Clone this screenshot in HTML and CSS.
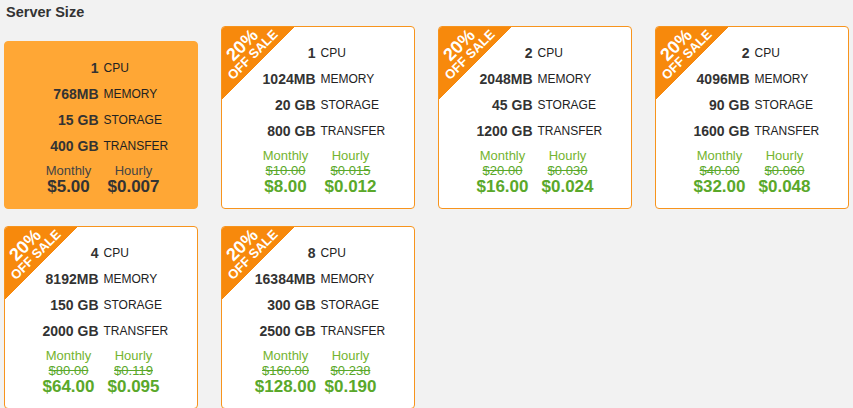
FILE: index.html
```html
<!DOCTYPE html>
<html lang="en">
<head>
<meta charset="UTF-8">
<title>Server Size</title>
<link rel="stylesheet" href="styles.css">
</head>
<body>

<h3 class="titulo">Server Size</h3>

<div class="planos">
    <div class="plano selecionado">
        <div class="specs">
            <b>1</b><span>CPU</span>
            <b>768MB</b><span>MEMORY</span>
            <b>15 GB</b><span>STORAGE</span>
            <b>400 GB</b><span>TRANSFER</span>
        </div>
        <div class="precos">
            <div><div class="rotulo">Monthly</div><div class="novo">$5.00</div></div>
            <div><div class="rotulo">Hourly</div><div class="novo">$0.007</div></div>
        </div>
    </div>

    <div class="plano">
        <div class="selo"><span class="pct">20%</span><span class="off">OFF SALE</span></div>
        <div class="specs">
            <b>1</b><span>CPU</span>
            <b>1024MB</b><span>MEMORY</span>
            <b>20 GB</b><span>STORAGE</span>
            <b>800 GB</b><span>TRANSFER</span>
        </div>
        <div class="precos">
            <div><div class="rotulo">Monthly</div><div class="antigo">$10.00</div><div class="novo">$8.00</div></div>
            <div><div class="rotulo">Hourly</div><div class="antigo">$0.015</div><div class="novo">$0.012</div></div>
        </div>
    </div>

    <div class="plano">
        <div class="selo"><span class="pct">20%</span><span class="off">OFF SALE</span></div>
        <div class="specs">
            <b>2</b><span>CPU</span>
            <b>2048MB</b><span>MEMORY</span>
            <b>45 GB</b><span>STORAGE</span>
            <b>1200 GB</b><span>TRANSFER</span>
        </div>
        <div class="precos">
            <div><div class="rotulo">Monthly</div><div class="antigo">$20.00</div><div class="novo">$16.00</div></div>
            <div><div class="rotulo">Hourly</div><div class="antigo">$0.030</div><div class="novo">$0.024</div></div>
        </div>
    </div>

    <div class="plano">
        <div class="selo"><span class="pct">20%</span><span class="off">OFF SALE</span></div>
        <div class="specs">
            <b>2</b><span>CPU</span>
            <b>4096MB</b><span>MEMORY</span>
            <b>90 GB</b><span>STORAGE</span>
            <b>1600 GB</b><span>TRANSFER</span>
        </div>
        <div class="precos">
            <div><div class="rotulo">Monthly</div><div class="antigo">$40.00</div><div class="novo">$32.00</div></div>
            <div><div class="rotulo">Hourly</div><div class="antigo">$0.060</div><div class="novo">$0.048</div></div>
        </div>
    </div>

    <div class="plano">
        <div class="selo"><span class="pct">20%</span><span class="off">OFF SALE</span></div>
        <div class="specs">
            <b>4</b><span>CPU</span>
            <b>8192MB</b><span>MEMORY</span>
            <b>150 GB</b><span>STORAGE</span>
            <b>2000 GB</b><span>TRANSFER</span>
        </div>
        <div class="precos">
            <div><div class="rotulo">Monthly</div><div class="antigo">$80.00</div><div class="novo">$64.00</div></div>
            <div><div class="rotulo">Hourly</div><div class="antigo">$0.119</div><div class="novo">$0.095</div></div>
        </div>
    </div>

    <div class="plano">
        <div class="selo"><span class="pct">20%</span><span class="off">OFF SALE</span></div>
        <div class="specs">
            <b>8</b><span>CPU</span>
            <b>16384MB</b><span>MEMORY</span>
            <b>300 GB</b><span>STORAGE</span>
            <b>2500 GB</b><span>TRANSFER</span>
        </div>
        <div class="precos">
            <div><div class="rotulo">Monthly</div><div class="antigo">$160.00</div><div class="novo">$128.00</div></div>
            <div><div class="rotulo">Hourly</div><div class="antigo">$0.238</div><div class="novo">$0.190</div></div>
        </div>
    </div>
</div>

</body>
</html>
```

FILE: styles.css
```css
body {
    font-family: "Liberation Sans", Arial, sans-serif;
    background-color: #f2f2f2;
    color: #333;
    margin: 0;
    padding: 0 4px;
}
.titulo {
    font-size: 14.5px;
    line-height: 18px;
    margin: 3px 0 0 2px;
    color: #333;
}
.planos {
    display: flex;
    flex-wrap: wrap;
    align-items: flex-end;
    column-gap: 23px;
    row-gap: 17px;
    margin-top: 5px;
}
.plano {
    position: relative;
    width: 192px;
    background-color: #ffffff;
    border: 1px solid #f7941d;
    border-radius: 4px;
    padding: 13px 0 12px;
}
.plano.selecionado {
    background-color: #ffa735;
    border-color: #ffa735;
}
.selo {
    position: absolute;
    left: 0;
    top: 0;
    width: 72px;
    height: 72px;
    border-top-left-radius: 3px;
    background: linear-gradient(135deg, #f7890c 50%, transparent 50%);
}
.selo .pct,
.selo .off {
    position: absolute;
    width: 80px;
    text-align: center;
    color: #ffffff;
    font-weight: bold;
    transform: rotate(-45deg);
}
.selo .pct {
    left: -20px;
    top: 8px;
    font-size: 18px;
    line-height: 20px;
}
.selo .off {
    left: -9px;
    top: 21px;
    font-size: 13px;
    line-height: 14px;
}
.specs {
    display: grid;
    grid-template-columns: 1fr 1fr;
    column-gap: 5px;
    line-height: 26px;
}
.specs b {
    text-align: right;
    font-size: 14px;
    color: #333;
}
.specs span {
    font-size: 12px;
    color: #222;
}
.precos {
    display: grid;
    grid-template-columns: 65px 65px;
    justify-content: center;
    margin-top: 5px;
    text-align: center;
}
.rotulo {
    font-size: 13px;
    line-height: 14px;
    color: #74b42f;
}
.antigo {
    font-size: 13px;
    line-height: 15px;
    color: #5aa82a;
    text-decoration: line-through;
}
.novo {
    font-size: 17px;
    line-height: 18px;
    font-weight: bold;
    color: #5aa82a;
}
.selecionado .rotulo {
    color: #444;
}
.selecionado .novo {
    color: #333;
}
```
